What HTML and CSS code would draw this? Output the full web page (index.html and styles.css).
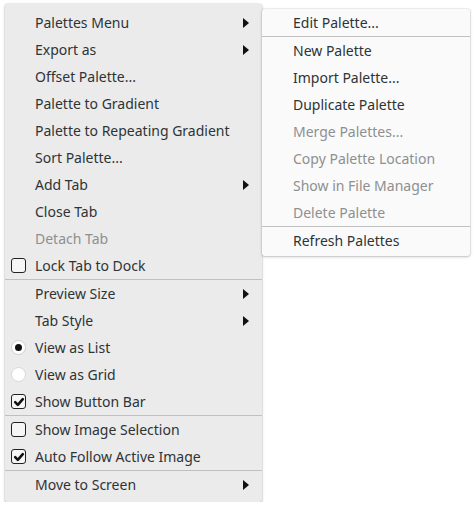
FILE: index.html
```html
<!DOCTYPE html>
<html>
<head>
<meta charset="utf-8">
<link rel="stylesheet" href="styles.css">
</head>
<body>
<div class="stage">
  <div class="menu main">
    <div class="item"><span class="label">Palettes Menu</span><span class="arrow"></span></div>
    <div class="item"><span class="label">Export as</span><span class="arrow"></span></div>
    <div class="item"><span class="label">Offset Palette...</span></div>
    <div class="item"><span class="label">Palette to Gradient</span></div>
    <div class="item"><span class="label">Palette to Repeating Gradient</span></div>
    <div class="item"><span class="label">Sort Palette...</span></div>
    <div class="item"><span class="label">Add Tab</span><span class="arrow"></span></div>
    <div class="item"><span class="label">Close Tab</span></div>
    <div class="item disabled"><span class="label">Detach Tab</span></div>
    <div class="item"><span class="check"></span><span class="label">Lock Tab to Dock</span></div>
    <div class="sep"></div>
    <div class="item"><span class="label">Preview Size</span><span class="arrow"></span></div>
    <div class="item"><span class="label">Tab Style</span><span class="arrow"></span></div>
    <div class="item"><span class="radio on"></span><span class="label">View as List</span></div>
    <div class="item"><span class="radio"></span><span class="label">View as Grid</span></div>
    <div class="item"><span class="check on"><svg viewBox="0 0 14 14" width="14" height="14"><path d="M3.2 7.2 L5.8 9.8 L10.8 4.2" fill="none" stroke="#111" stroke-width="2.6" stroke-linecap="round" stroke-linejoin="round"/></svg></span><span class="label">Show Button Bar</span></div>
    <div class="sep"></div>
    <div class="item"><span class="check"></span><span class="label">Show Image Selection</span></div>
    <div class="item"><span class="check on"><svg viewBox="0 0 14 14" width="14" height="14"><path d="M3.2 7.2 L5.8 9.8 L10.8 4.2" fill="none" stroke="#111" stroke-width="2.6" stroke-linecap="round" stroke-linejoin="round"/></svg></span><span class="label">Auto Follow Active Image</span></div>
    <div class="sep"></div>
    <div class="item"><span class="label">Move to Screen</span><span class="arrow"></span></div>
  </div>
  <div class="menu sub">
    <div class="item"><span class="label">Edit Palette...</span></div>
    <div class="sep"></div>
    <div class="item"><span class="label">New Palette</span></div>
    <div class="item"><span class="label">Import Palette...</span></div>
    <div class="item"><span class="label">Duplicate Palette</span></div>
    <div class="item disabled"><span class="label">Merge Palettes...</span></div>
    <div class="item disabled"><span class="label">Copy Palette Location</span></div>
    <div class="item disabled"><span class="label">Show in File Manager</span></div>
    <div class="item disabled"><span class="label">Delete Palette</span></div>
    <div class="sep"></div>
    <div class="item"><span class="label">Refresh Palettes</span></div>
  </div>
</div>
</body>
</html>
```

FILE: styles.css
```css
html, body {
  margin: 0;
  padding: 0;
  background: #ffffff;
}
body {
  font-family: "Noto Sans", "DejaVu Sans", sans-serif;
  font-size: 14px;
  color: #2e3436;
}
.stage {
  display: flex;
  align-items: flex-start;
  padding: 4px 0 0 5px;
}
.menu {
  display: flex;
  flex-direction: column;
  border-radius: 3px;
}
.main {
  width: 257px;
  background: #ebebeb;
  padding: 5px 0 4px 0;
  box-shadow: 0 1px 3px rgba(0, 0, 0, 0.22), 0 0 0 1px rgba(0, 0, 0, 0.05);
}
.sub {
  width: 208px;
  background: #fafafa;
  margin-top: 5px;
  padding: 0 0 2px 0;
  box-shadow: 0 1px 3px rgba(0, 0, 0, 0.22), 0 0 0 1px rgba(0, 0, 0, 0.05);
  position: relative;
  z-index: 1;
}
.item {
  height: 27px;
  display: flex;
  align-items: center;
  position: relative;
  padding-left: 30px;
  padding-right: 12px;
}
.label {
  flex: 1;
  white-space: nowrap;
}
.disabled {
  color: #8d9091;
}
.sep {
  height: 1px;
  background: #c0c0c0;
}
.arrow {
  width: 0;
  height: 0;
  border-top: 5px solid transparent;
  border-bottom: 5px solid transparent;
  border-left: 6px solid #111;
  margin-right: 1px;
}
.check {
  position: absolute;
  left: 6px;
  top: 6px;
  width: 15px;
  height: 15px;
  box-sizing: border-box;
  border: 1px solid #222;
  border-radius: 3px;
  background: #f6f6f6;
}
.check svg {
  position: absolute;
  left: -0.5px;
  top: -0.5px;
}
.radio {
  position: absolute;
  left: 6px;
  top: 6px;
  width: 15px;
  height: 15px;
  box-sizing: border-box;
  border-radius: 50%;
  background: #ffffff;
  border: 1px solid #d8d8d8;
}
.radio.on {
  border-color: #cfcfcf;
}
.radio.on::after {
  content: "";
  position: absolute;
  left: 3px;
  top: 3px;
  width: 7px;
  height: 7px;
  border-radius: 50%;
  background: #111;
}
.sub .item {
  padding-left: 31px;
}
```
